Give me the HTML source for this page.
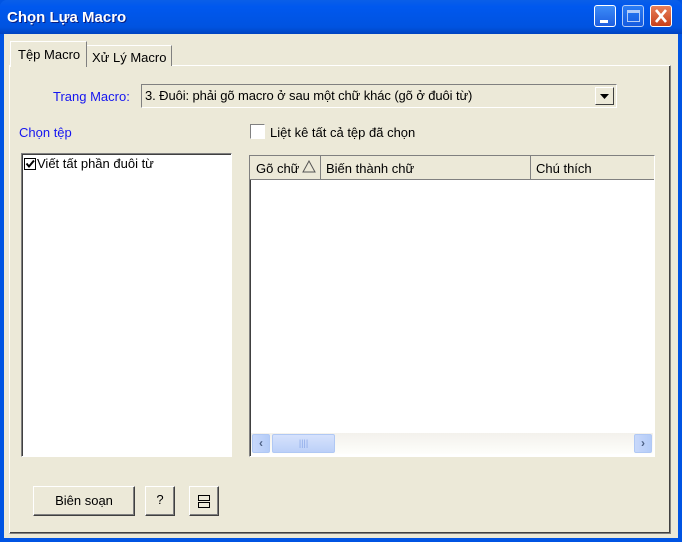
<!DOCTYPE html>
<html><head><meta charset="utf-8"><style>
*{margin:0;padding:0;box-sizing:border-box}
body{width:682px;height:542px;overflow:hidden;background:#0054E3;font-family:"Liberation Sans",sans-serif;font-size:13px;position:relative}
.abs{position:absolute}
#title{left:0;top:0;width:682px;height:34px;background:linear-gradient(#0A5FE8,#0058EE 20%,#0053E0 80%,#0043C0);border-radius:7px 7px 0 0}
#title span{position:absolute;left:7px;top:9px;color:#fff;font-weight:bold;font-size:15px;text-shadow:1px 1px #0A1E80}
.tb{position:absolute;top:5px;width:22px;height:22px;border:1px solid #fff;border-radius:3px;background:linear-gradient(#3C8CF8,#1F5FE0)}
#client{left:4px;top:34px;width:674px;height:504px;background:#ECE9D8}
.lbl{color:#1515F0}
.btn{position:absolute;border:1px solid;border-color:#fff #404040 #404040 #fff;box-shadow:inset -1px -1px #808080;background:#ECE9D8;text-align:center;color:#000}
</style></head><body>
<div id="title" class="abs"><span>Chọn Lựa Macro</span>
<div class="tb" style="left:594px"><div style="position:absolute;left:5px;top:14px;width:8px;height:3px;background:#fff"></div></div>
<div class="tb" style="left:622px;opacity:.7"><div style="position:absolute;left:4px;top:4px;width:13px;height:12px;border:1px solid #fff;border-top-width:3px"></div></div>
<div class="tb" style="left:650px;background:linear-gradient(#E8805A,#C8401A)"><svg width="20" height="20" style="position:absolute;left:0;top:0"><path d="M5 4L15 16M15 4L5 16" stroke="#fff" stroke-width="2.6"/></svg></div>
</div>
<div id="client" class="abs"></div>
<div class="abs" style="left:9px;top:65px;width:662px;height:469px;border:1px solid;border-color:#fff #808080 #808080 #fff;box-shadow:inset -1px -1px #404040;background:#ECE9D8"></div>
<div class="abs" style="left:86px;top:45px;width:86px;height:21px;border:1px solid;border-color:#fff #808080 transparent #fff;border-bottom:none;background:#ECE9D8;font-size:13px;padding:4px 0 0 5px">Xử Lý Macro</div>
<div class="abs" style="left:10px;top:41px;width:77px;height:26px;border:1px solid;border-color:#fff #808080 transparent #fff;border-bottom:none;background:#ECE9D8;font-size:13px;padding:5px 0 0 7px">Tệp Macro</div>
<div class="abs lbl" style="left:53px;top:89px">Trang Macro:</div>
<div class="abs" style="left:141px;top:84px;width:476px;height:24px;border:1px solid;border-color:#808080 #fff #fff #808080;background:#ECE9D8;padding:3px 0 0 3px;letter-spacing:-0.1px">3. Đuôi: phải gõ macro ở sau một chữ khác (gõ ở đuôi từ)</div>
<div class="abs" style="left:595px;top:87px;width:19px;height:18px;background:#ECE9D8;border:1px solid;border-color:#fff #404040 #404040 #fff"><svg width="17" height="16"><path d="M4 6h9l-4.5 5z" fill="#000"/></svg></div>
<div class="abs lbl" style="left:19px;top:125px">Chọn tệp</div>
<div class="abs" style="left:250px;top:124px;width:15px;height:15px;border:1px solid;border-color:#808080 #fff #fff #808080;background:#fff"></div>
<div class="abs" style="left:270px;top:125px">Liệt kê tất cả tệp đã chọn</div>
<div class="abs" style="left:21px;top:153px;width:211px;height:304px;border:1px solid;border-color:#808080 #fff #fff #808080;box-shadow:inset 1px 1px #404040;background:#fff"></div>
<div class="abs" style="left:24px;top:158px;width:12px;height:12px;border:1px solid #000;background:#fff"><svg width="10" height="10" style="position:absolute;left:0;top:0"><path d="M1.5 4.5l2.5 3 5-6" stroke="#000" stroke-width="2" fill="none"/></svg></div>
<div class="abs" style="left:37px;top:156px">Viết tất phần đuôi từ</div>
<div class="abs" style="left:249px;top:155px;width:406px;height:302px;border:1px solid;border-color:#808080 #fff #fff #808080;box-shadow:inset 1px 1px #404040;background:#fff"></div>
<div class="abs" style="left:250px;top:156px;width:404px;height:24px;background:#ECE9D8;border-bottom:1px solid #808080"></div>
<div class="abs" style="left:320px;top:156px;width:1px;height:24px;background:#808080"></div>
<div class="abs" style="left:530px;top:156px;width:1px;height:24px;background:#808080"></div>
<div class="abs" style="left:256px;top:161px">Gõ chữ</div>
<svg class="abs" style="left:302px;top:160px" width="14" height="13"><path d="M1 12h12L7 1z" fill="none" stroke="#555"/></svg>
<div class="abs" style="left:326px;top:161px">Biến thành chữ</div>
<div class="abs" style="left:536px;top:161px">Chú thích</div>
<div class="abs" style="left:251px;top:433px;width:402px;height:21px;background:linear-gradient(#F3F1EC,#FEFEFB)"></div>
<div class="abs" style="left:252px;top:434px;width:18px;height:19px;border:1px solid #B0C8F4;border-radius:2px;background:linear-gradient(90deg,#C8D8FA,#B4CCF8);color:#4D6185;font-size:12px;font-weight:bold;text-align:center;line-height:17px">‹</div>
<div class="abs" style="left:272px;top:434px;width:63px;height:19px;border:1px solid #B0C8F4;border-radius:2px;background:linear-gradient(#D6E2FC,#BCD0F8);color:#8AA8E8;font-size:9px;text-align:center;line-height:17px">||||</div>
<div class="abs" style="left:634px;top:434px;width:18px;height:19px;border:1px solid #B0C8F4;border-radius:2px;background:linear-gradient(90deg,#C8D8FA,#B4CCF8);color:#4D6185;font-size:12px;font-weight:bold;text-align:center;line-height:17px">›</div>
<div class="btn" style="left:33px;top:486px;width:102px;height:30px;line-height:28px">Biên soạn</div>
<div class="btn" style="left:145px;top:486px;width:30px;height:30px;line-height:26px">?</div>
<div class="btn" style="left:189px;top:486px;width:30px;height:30px"><div style="position:absolute;left:8px;top:8px;width:12px;height:6px;border:1px solid #000"></div><div style="position:absolute;left:8px;top:15px;width:12px;height:6px;border:1px solid #000"></div></div>
</body></html>
